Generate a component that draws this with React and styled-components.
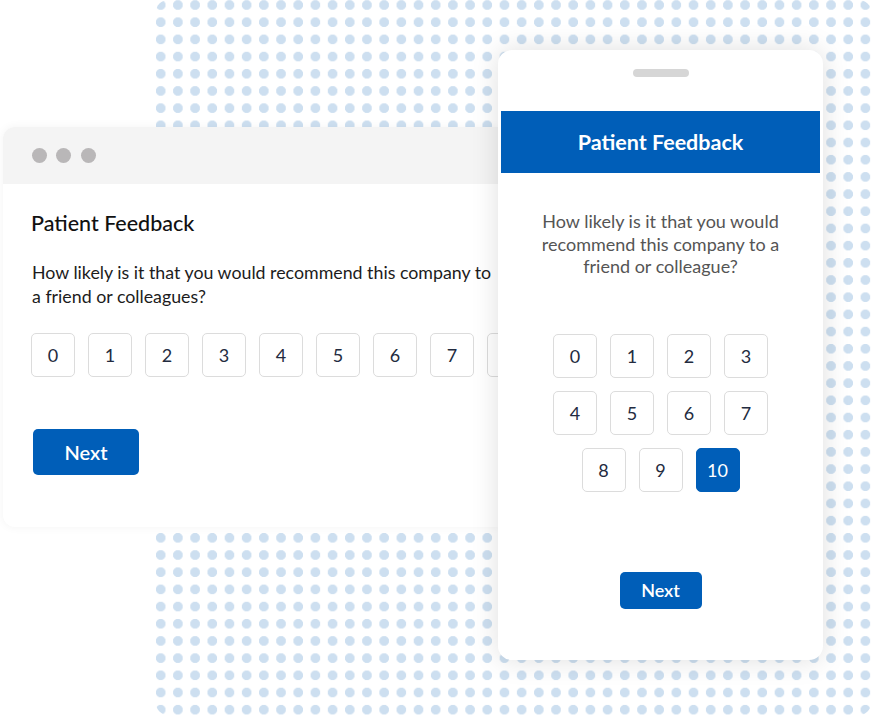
import styled, { createGlobalStyle } from "styled-components";

const BLUE = "#005eb8";
const FONT = `"Lato", "Noto Sans", "Liberation Sans", sans-serif`;

const GlobalStyle = createGlobalStyle`
  html, body {
    margin: 0;
    padding: 0;
    background: #fff;
  }
  body {
    font-family: ${FONT};
    -webkit-font-smoothing: antialiased;
  }
`;

function App() {
  const scale = [0, 1, 2, 3, 4, 5, 6, 7, 8, 9, 10];
  return (
    <>
      <GlobalStyle />
      <Stage>
        <DotField />

        <BrowserWindow>
          <TitleBar>
            <WinDot />
            <WinDot />
            <WinDot />
          </TitleBar>
          <WindowBody>
            <Heading>Patient Feedback</Heading>
            <Question>
              How likely is it that you would recommend this company to
              <br />a friend or colleagues?
            </Question>
            <ScaleRow>
              {scale.slice(0, 9).map((n) => (
                <ScoreBox key={n}>{n}</ScoreBox>
              ))}
            </ScaleRow>
            <NextButton>Next</NextButton>
          </WindowBody>
        </BrowserWindow>

        <Phone>
          <Notch />
          <PhoneHeader>Patient Feedback</PhoneHeader>
          <PhoneQuestion>
            How likely is it that you would
            <br />
            recommend this company to a
            <br />
            friend or colleague?
          </PhoneQuestion>
          <ScaleGrid>
            {scale.map((n) => (
              <ScoreBox key={n} selected={n === 10}>
                {n}
              </ScoreBox>
            ))}
          </ScaleGrid>
          <NextButton small>Next</NextButton>
        </Phone>
      </Stage>
    </>
  );
}

const Stage = styled.div`
  position: relative;
  width: 878px;
  height: 718px;
  overflow: hidden;
`;

const DotField = styled.div`
  position: absolute;
  left: 156px;
  top: 0;
  width: 715px;
  height: 715px;
  border-radius: 12px;
  background-image: radial-gradient(
    circle,
    #cddff0 4.5px,
    rgba(205, 223, 240, 0) 5.2px
  );
  background-size: 17.2px 17.2px;
  background-position: -3.9px -3.6px;
`;

const BrowserWindow = styled.div`
  position: absolute;
  left: 3px;
  top: 127px;
  width: 496px;
  height: 400px;
  background: #fff;
  border-radius: 12px 0 0 12px;
  box-shadow: 0 0 10px rgba(0, 0, 0, 0.05);
  overflow: hidden;
`;

const TitleBar = styled.div`
  height: 57px;
  background: #f4f4f4;
  display: flex;
  align-items: center;
  gap: 9.5px;
  padding-left: 28.5px;
`;

const WinDot = styled.span`
  width: 15px;
  height: 15px;
  border-radius: 50%;
  background: #b9b7b8;
`;

const WindowBody = styled.div`
  padding: 26px 0 0 28px;
  display: flex;
  flex-direction: column;
  align-items: flex-start;
`;

const Heading = styled.h2`
  margin: 0;
  font-size: 21.5px;
  line-height: 26px;
  font-weight: 500;
  color: #111;
`;

const Question = styled.p`
  margin: 24px 0 0 1px;
  font-size: 17.8px;
  line-height: 24px;
  color: #1c1c1c;
  white-space: nowrap;
`;

const ScaleRow = styled.div`
  display: flex;
  gap: 13px;
  margin-top: 25px;
`;

const ScoreBox = styled.div`
  width: 44px;
  height: 44px;
  box-sizing: border-box;
  flex-shrink: 0;
  display: flex;
  align-items: center;
  justify-content: center;
  border: 1.5px solid ${(p) => (p.selected ? BLUE : "#dcdcdc")};
  border-radius: 5px;
  background: ${(p) => (p.selected ? BLUE : "#fff")};
  color: ${(p) => (p.selected ? "#fff" : "#232b40")};
  font-size: 18px;
`;

const NextButton = styled.button`
  font-family: ${FONT};
  border: none;
  background: ${BLUE};
  color: #fff;
  border-radius: 5px;
  width: ${(p) => (p.small ? "82px" : "106px")};
  height: ${(p) => (p.small ? "37px" : "46px")};
  font-size: ${(p) => (p.small ? "18px" : "20px")};
  font-weight: 600;
  margin-top: ${(p) => (p.small ? "80px" : "52px")};
  margin-left: ${(p) => (p.small ? "0" : "2px")};
  padding: 0;
`;

const Phone = styled.div`
  position: absolute;
  left: 498px;
  top: 50px;
  width: 325px;
  height: 610px;
  background: #fff;
  border-radius: 14px;
  box-shadow: 0 0 28px rgba(0, 0, 0, 0.13);
  display: flex;
  flex-direction: column;
  align-items: center;
`;

const Notch = styled.div`
  width: 56px;
  height: 8px;
  border-radius: 4px;
  background: #d6d6d6;
  margin-top: 19px;
`;

const PhoneHeader = styled.div`
  align-self: stretch;
  margin: 34px 3px 0;
  height: 62px;
  background: ${BLUE};
  color: #fff;
  display: flex;
  align-items: center;
  justify-content: center;
  font-size: 21.5px;
  font-weight: 700;
`;

const PhoneQuestion = styled.p`
  margin: 37px 0 0;
  text-align: center;
  font-size: 18px;
  line-height: 22.5px;
  color: #555;
`;

const ScaleGrid = styled.div`
  width: 215px;
  display: flex;
  flex-wrap: wrap;
  justify-content: center;
  gap: 13px;
  margin-top: 56px;
`;

export default App;
